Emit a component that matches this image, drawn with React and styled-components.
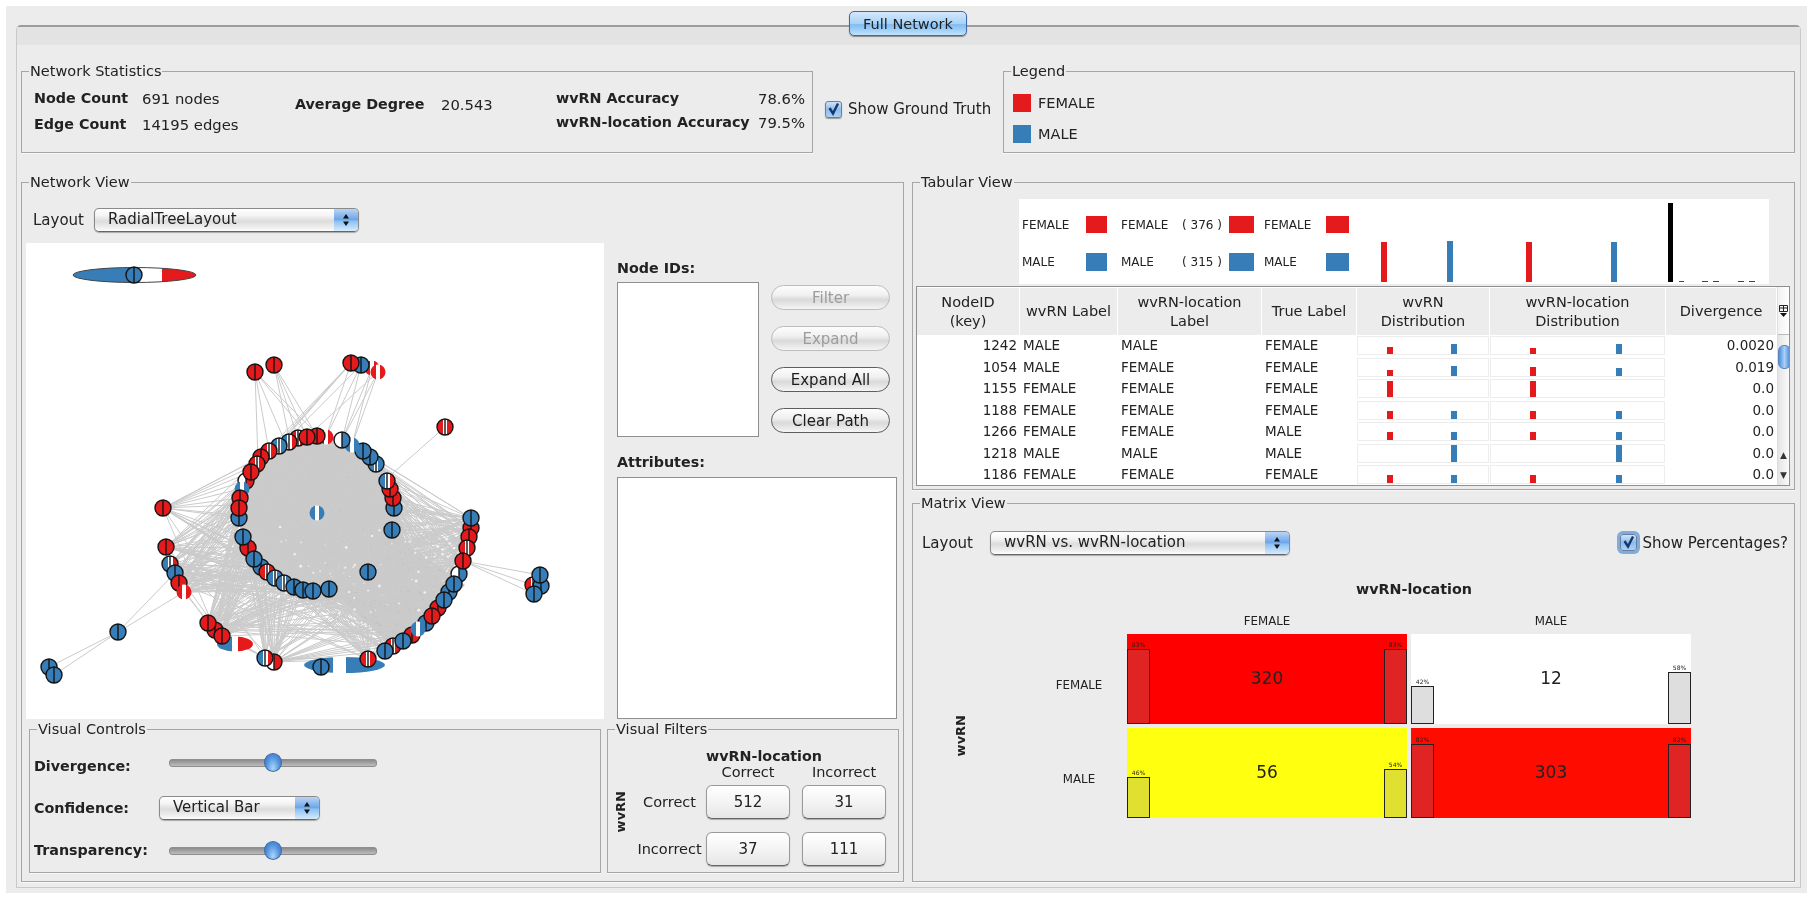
import React from "react";
import styled, { createGlobalStyle } from "styled-components";

const RED = "#e41a1c";
const BLUE = "#377eb8";

const GlobalStyle = createGlobalStyle`
  html, body {
    margin: 0;
    padding: 0;
    background: #ffffff;
    font-family: "DejaVu Sans", "Liberation Sans", sans-serif;
    font-size: 15px;
    color: #222;
  }
`;

const Window = styled.div`
  position: relative;
  margin: 6px 0 0 6px;
  width: 1801px;
  height: 887px;
  background: #ececec;
  padding: 19px 0 0 10px;
  box-sizing: border-box;
  filter: blur(0.5px);
`;

const TabButton = styled.div`
  position: absolute;
  top: 5px;
  left: 843px;
  width: 118px;
  height: 25px;
  box-sizing: border-box;
  border: 1px solid #3f68a8;
  border-radius: 5px;
  background: linear-gradient(#d4e8fb, #a9d2f7 50%, #7fbcf2 55%, #c0e2fc);
  display: flex;
  align-items: center;
  justify-content: center;
  font-size: 14.5px;
  box-shadow: 0 1px 1px #888;
`;

const TabPane = styled.div`
  width: 1785px;
  height: 863px;
  box-sizing: border-box;
  border: 1px solid #c9c9c9;
  border-top: 2px solid #9c9c9c;
  border-radius: 5px 5px 0 0;
`;

const TabBand = styled.div`
  height: 18px;
  background: #e3e3e3;
`;

const Content = styled.div`
  padding: 18px 0 0 4px;
  width: 1774px;
`;

const TopRow = styled.div`
  display: flex;
  height: 90px;
  margin-bottom: 21px;
`;

const MainRow = styled.div`
  display: flex;
  gap: 8px;
`;

const Group = styled.fieldset`
  margin: 0 0 0 ${(p) => (p.$push ? "auto" : "0")};
  padding: 0;
  min-width: 0;
  box-sizing: border-box;
  width: ${(p) => p.$w}px;
  height: ${(p) => p.$h}px;
  border: 1px solid #a6a6a6;
  flex: none;
  box-shadow: 0 1px 0 #f8f8f8;
`;

const GroupTitle = styled.legend`
  margin-left: 7px;
  padding: 0 1px;
  font-size: 14.5px;
  line-height: 16px;
  color: #222;
`;

const Stats = styled.div`
  display: flex;
  padding: 0 0 0 12px;
`;

const StatCol = styled.div`
  width: ${(p) => p.$w}px;
  flex: none;
  display: flex;
  flex-direction: column;
  justify-content: center;
  gap: ${(p) => p.$gap}px;
  height: 46px;
  margin-top: ${(p) => p.$top || 0}px;
`;

const StatRow = styled.div`
  display: flex;
  justify-content: ${(p) => (p.$spread ? "space-between" : "flex-start")};
  line-height: 17px;
  white-space: nowrap;
`;

const StatName = styled.span`
  font-weight: bold;
  font-size: 14.3px;
  width: ${(p) => p.$w}px;
  flex: none;
`;

const StatValue = styled.span`
  font-size: 14.8px;
`;

const CheckLabel = styled.div`
  display: flex;
  align-items: center;
  gap: 6px;
  font-size: 15px;
  white-space: nowrap;
  margin: ${(p) => p.$margin};
`;

const CheckBox = styled.span`
  width: 17px;
  height: 17px;
  box-sizing: border-box;
  border: 1px solid #6a7f9c;
  border-radius: 3px;
  background: linear-gradient(#cfe3f8, #8dbdee 50%, #a9d1f6);
  display: flex;
  align-items: center;
  justify-content: center;
  box-shadow: ${(p) => (p.$focus ? "0 0 0 3px #7dadde" : "0 1px 1px #999")};
`;

const LegendList = styled.div`
  display: flex;
  flex-direction: column;
  gap: 13px;
  padding: 15px 0 0 9px;
`;

const LegendRow = styled.div`
  display: flex;
  align-items: center;
  gap: 7px;
  font-size: 14.5px;
`;

const Swatch = styled.span`
  display: block;
  width: ${(p) => p.$w}px;
  height: ${(p) => p.$h}px;
  background: ${(p) => p.$color};
`;

const Toolbar = styled.div`
  display: flex;
  align-items: center;
  padding: ${(p) => p.$pad};
  gap: ${(p) => p.$gap}px;
  font-size: 15px;
`;

const SelectBox = styled.div`
  width: ${(p) => p.$w}px;
  height: 24px;
  box-sizing: border-box;
  flex: none;
  display: flex;
  border: 1px solid #8a8a8a;
  border-bottom-color: #666;
  border-radius: 5px;
  overflow: hidden;
  background: linear-gradient(#ffffff, #f4f4f4 30%, #dcdcdc 55%, #f3f3f3 90%, #fff);
  box-shadow: 0 1px 1px #aaa;
  font-size: 15px;
  margin-left: ${(p) => p.$shift || 0}px;
`;

const SelectText = styled.span`
  flex: 1;
  padding-left: 13px;
  line-height: 21px;
  white-space: nowrap;
`;

const SelectArrow = styled.span`
  width: 24px;
  flex: none;
  background: linear-gradient(#b9d5f5, #6ea6e8 48%, #8cc0f4 55%, #d6ecfd);
  display: flex;
  align-items: center;
  justify-content: center;
`;

const NetworkBody = styled.div`
  display: flex;
  padding: 11px 0 0 4px;
  gap: 13px;
`;

const Canvas = styled.svg`
  display: block;
  width: 578px;
  height: 476px;
  background: #fff;
  flex: none;
`;

const SidePanel = styled.div`
  width: 280px;
  flex: none;
  padding-top: 17px;
`;

const BoldLabel = styled.div`
  font-weight: bold;
  font-size: 14.3px;
  line-height: 17px;
  margin-bottom: ${(p) => p.$mb || 0}px;
`;

const NodeRow = styled.div`
  display: flex;
  gap: 12px;
  margin: 5px 0 17px;
`;

const ListBox = styled.div`
  width: ${(p) => p.$w}px;
  height: ${(p) => p.$h}px;
  box-sizing: border-box;
  background: #fff;
  border: 1px solid #8f8f8f;
  flex: none;
`;

const PillStack = styled.div`
  display: flex;
  flex-direction: column;
  gap: 16px;
  padding-top: 3px;
`;

const Pill = styled.div`
  width: 119px;
  height: 25px;
  box-sizing: border-box;
  border-radius: 13px;
  border: 1px solid ${(p) => (p.$off ? "#bcbcbc" : "#5e5e5e")};
  background: linear-gradient(#fdfdfd, #f0f0f0 40%, #d9d9d9 60%, #f5f5f5);
  color: ${(p) => (p.$off ? "#9c9c9c" : "#1c1c1c")};
  display: flex;
  align-items: center;
  justify-content: center;
  font-size: 15px;
`;

const BottomRow = styled.div`
  display: flex;
  gap: 6px;
  padding: 2px 0 0 7px;
`;

const ControlGrid = styled.div`
  display: grid;
  grid-template-columns: 129px 206px;
  grid-template-rows: 42px 42px 42px;
  padding: 8px 0 0 4px;
  align-items: center;
`;

const Slider = styled.div`
  position: relative;
  width: 206px;
  height: 6px;
  border-radius: 3px;
  border: 1px solid #8e8e8e;
  box-sizing: content-box;
  background: linear-gradient(#8c8c8c, #bdbdbd);
  margin: ${(p) => p.$top}px 0 0 6px;
`;

const SliderThumb = styled.span`
  position: absolute;
  left: 94px;
  top: -7px;
  width: 18px;
  height: 19px;
  border-radius: 50%;
  border: 1px solid #44699e;
  box-sizing: border-box;
  background: radial-gradient(ellipse at 50% 85%, #a8d8fb, #4f8fdc 60%, #3b77c8);
`;

const FilterGrid = styled.div`
  display: grid;
  grid-template-columns: 20px 73px 96px 84px;
  grid-template-rows: 19px 13px 47px 47px;
  padding: 9px 0 0 5px;
  font-size: 14.5px;
  align-items: center;
`;

const FilterTitle = styled.div`
  grid-column: 3 / span 2;
  font-weight: bold;
  font-size: 14.3px;
  white-space: nowrap;
`;

const FilterHead = styled.div`
  text-align: center;
  width: 84px;
  grid-column: ${(p) => p.$col};
`;

const RotatedBold = styled.div`
  writing-mode: vertical-rl;
  transform: rotate(180deg);
  font-weight: bold;
  font-size: 13px;
  text-align: center;
`;

const FilterSide = styled(RotatedBold)`
  grid-column: 1;
  grid-row: 3 / span 2;
  margin-top: 0;
  margin-bottom: 26px;
`;

const FilterRowName = styled.div`
  text-align: center;
  white-space: nowrap;
`;

const CountButton = styled.div`
  width: 84px;
  height: 34px;
  box-sizing: border-box;
  border: 1px solid #9a9a9a;
  border-bottom-color: #666;
  border-radius: 6px;
  background: linear-gradient(#ffffff, #f4f4f4 50%, #e6e6e6);
  display: flex;
  align-items: center;
  justify-content: center;
  font-size: 15px;
  box-shadow: 0 1px 1px #aaa;
`;

const RightCol = styled.div`
  display: flex;
  flex-direction: column;
  gap: 5px;
  width: 883px;
`;

const Summary = styled.div`
  display: flex;
  height: 85px;
  width: 853px;
  margin: 9px 0 2px 3px;
  background: #fff;
`;

const SummaryCorner = styled.div`
  width: 103px;
  flex: none;
  background: #ececec;
`;

const SummaryKey = styled.div`
  display: grid;
  grid-template-columns: 64px 21px 14px 61px 47px 25px 10px 62px 23px;
  grid-template-rows: 39px 36px;
  padding: 6px 0 0 3px;
  font-size: 12px;
  align-items: center;
  flex: none;
  width: 330px;
  box-sizing: border-box;
`;

const KeyText = styled.span`
  white-space: nowrap;
  font-size: 12px;
`;

const Ticks = styled.div`
  position: relative;
  flex: 1;
`;

const Tick = styled.span`
  position: absolute;
  bottom: 2px;
  left: ${(p) => p.$x}px;
  width: ${(p) => p.$w}px;
  height: ${(p) => p.$h}px;
  background: ${(p) => p.$color};
`;

const TableWrap = styled.div`
  margin: 0 0 0 3px;
  width: 874px;
  height: 200px;
  box-sizing: border-box;
  border: 1px solid #8f8f8f;
  display: flex;
  background: #fff;
  overflow: hidden;
`;

const TableMain = styled.div`
  width: 860px;
  flex: none;
`;

const ColGrid = styled.div`
  display: grid;
  grid-template-columns: 103px 98px 144px 95px 133px 176px 111px;
`;

const HeadRow = styled(ColGrid)`
  height: 47px;
  margin-top: 1px;
`;

const HeadCell = styled.div`
  background: #ececec;
  border-right: 1px solid #fff;
  display: flex;
  align-items: center;
  justify-content: center;
  text-align: center;
  font-size: 14.5px;
  line-height: 19px;
  white-space: pre-line;
`;

const DataRow = styled(ColGrid)`
  height: 21.5px;
  font-size: 13.5px;
  line-height: 21px;
`;

const IdCell = styled.div`
  text-align: right;
  padding-right: 3px;
`;

const TextCell = styled.div`
  padding-left: 3px;
`;

const NumCell = styled.div`
  text-align: right;
  padding-right: 3px;
`;

const DistCell = styled.div`
  height: 19px;
  box-sizing: border-box;
  margin: 1px 1px 0 0;
  border: 1px solid #ededed;
  display: grid;
  grid-template-columns: ${(p) => p.$cols};
  align-items: end;
  justify-items: start;
  padding-left: ${(p) => p.$pad}px;
`;

const DistBar = styled.span`
  display: block;
  width: 6px;
  background: ${(p) => p.$color};
  height: ${(p) => p.$h}px;
`;

const Scroller = styled.div`
  flex: 1;
  background: linear-gradient(90deg, #e4e4e4, #fafafa);
  position: relative;
  border-left: 1px solid #ddd;
`;

const ScrollCorner = styled.div`
  height: 48px;
  box-sizing: border-box;
  border-bottom: 1px solid #bbb;
  background: linear-gradient(90deg, #f2f2f2, #ffffff);
  display: flex;
  align-items: center;
  justify-content: center;
`;

const ScrollThumb = styled.div`
  position: absolute;
  top: 58px;
  left: 0;
  width: 13px;
  height: 24px;
  border-radius: 6px;
  background: linear-gradient(90deg, #4f8ddc, #a9d0f8 50%, #4c86d6);
  border: 1px solid #5a84bd;
  box-sizing: border-box;
`;

const ScrollArrow = styled.div`
  position: absolute;
  left: 0;
  right: 0;
  height: 20px;
  top: ${(p) => p.$top}px;
  display: flex;
  align-items: center;
  justify-content: center;
`;

const MatrixBar = styled.div`
  display: flex;
  justify-content: space-between;
  padding: 11px 6px 0 9px;
  height: 41px;
  align-items: center;
  box-sizing: content-box;
`;

const MatrixLeft = styled.div`
  display: flex;
  align-items: center;
  gap: 17px;
  font-size: 15px;
`;

const MatrixHeading = styled.div`
  font-weight: bold;
  font-size: 14.3px;
  text-align: center;
  margin: 18px 0 0 0;
  padding-left: 121px;
  height: 17px;
  line-height: 17px;
`;

const MatrixGrid = styled.div`
  display: grid;
  grid-template-columns: 78px 96px 284px 284px;
  grid-template-rows: 26px 94px 90px;
  margin: 10px 0 0 40px;
  align-items: center;
  font-size: 11.8px;
`;

const MatrixSide = styled(RotatedBold)`
  grid-column: 1;
  grid-row: 2 / span 2;
  margin-top: 20px;
`;

const ColName = styled.div`
  text-align: center;
  width: 280px;
  grid-column: ${(p) => p.$col};
`;

const RowName = styled.div`
  text-align: center;
  grid-column: 2;
  align-self: start;
  line-height: 90px;
  margin-top: 6px;
`;

const MatrixCell = styled.div`
  height: 90px;
  width: 280px;
  background: ${(p) => p.$bg};
  display: flex;
  justify-content: space-between;
  align-self: start;
  font-size: 17px;
`;

const CellCount = styled.span`
  flex: 1;
  align-self: center;
  text-align: center;
  padding-bottom: 2px;
`;

const RatioCol = styled.div`
  width: 23px;
  height: 90px;
  display: flex;
  flex-direction: column;
  justify-content: flex-end;
  align-items: center;
`;

const RatioText = styled.span`
  font-size: 6px;
  line-height: 8px;
`;

const RatioBar = styled.div`
  width: 23px;
  box-sizing: border-box;
  border: 1.5px solid #222;
  background: ${(p) => p.$fill};
`;

const TinyArrows = ({ color = "#111" }) => (
  <svg width="8" height="14" viewBox="0 0 8 14">
    <path d="M4 1 L7 5.5 L1 5.5 Z M4 13 L7 8.5 L1 8.5 Z" fill={color} />
  </svg>
);

const Tickmark = () => (
  <svg width="13" height="13" viewBox="0 0 13 13">
    <path d="M2.5 5 L6 10.5 L11 0.5" fill="none" stroke="#17386b" strokeWidth="2.4" />
  </svg>
);

const Select = ({ w, shift, children }) => (
  <SelectBox $w={w} $shift={shift}>
    <SelectText>{children}</SelectText>
    <SelectArrow>
      <TinyArrows />
    </SelectArrow>
  </SelectBox>
);

// simple seeded random so the edges stay the same on each render
const makeRandom = (seed) => () => {
  seed = (seed * 16807) % 2147483647;
  return (seed - 1) / 2147483646;
};

const inner = [
  [394, 508, "b"], [393, 498, "r"], [390, 489, "r"], [387, 481, "brw"], [376, 464, "bw"], [370, 457, "b"],
  [363, 451, "b"], [352, 445, "bw", 1], [342, 440, "wb"], [326, 437, "rw", 1], [317, 436, "r"], [298, 438, "rw"],
  [307, 437, "r"], [289, 442, "bwr"], [279, 446, "bw"], [269, 451, "rw"], [261, 457, "r"], [257, 464, "rw"],
  [246, 481, "wr"], [251, 472, "r"], [242, 489, "bw", 1], [239, 518, "b"], [240, 498, "r"], [239, 508, "r"],
  [392, 530, "b"], [248, 548, "r"], [243, 537, "b"], [261, 567, "b"], [254, 559, "b"], [267, 572, "rw"],
  [275, 578, "bw"], [284, 583, "bw"], [294, 587, "b"], [303, 590, "b"], [313, 591, "b"], [329, 589, "b"],
  [368, 572, "b"],
];

const lower = [
  [471, 528, "r"], [471, 518, "b"], [469, 537, "r"], [467, 548, "rw"], [459, 574, "wb"], [463, 561, "r"],
  [449, 592, "b"], [454, 584, "b"], [438, 608, "r"], [444, 600, "b"], [426, 623, "b"], [432, 616, "r"],
  [412, 635, "r"], [418, 629, "bw", 1], [393, 646, "rw"], [403, 641, "b"], [385, 651, "b"], [368, 659, "rw"],
  [274, 662, "wr"], [265, 658, "bwr"], [215, 630, "r"], [208, 623, "r"], [222, 636, "r"],
];

const leftSide = [
  [163, 508, "r"], [166, 547, "r"], [170, 564, "bwr"], [175, 573, "b"], [179, 583, "r"], [184, 592, "rw", 1],
];

const outliers = [
  [255, 372, "r"], [274, 365, "r"], [372, 368, "rw", 1], [378, 372, "rw", 1], [361, 365, "b"], [351, 363, "r"],
  [445, 427, "rw"], [118, 632, "b"], [49, 667, "b"], [54, 675, "b"], [321, 667, "b"], [533, 585, "rw"],
  [541, 586, "b"], [540, 575, "b"], [534, 594, "b"], [317, 513, "bw", 1],
];

const buildEdges = () => {
  const rand = makeRandom(4711);
  let d = "";
  const link = (a, b) => {
    d += `M${a[0]} ${a[1]}L${b[0]} ${b[1]}`;
  };
  const mesh = (from, to, chance) => {
    from.forEach((a) => to.forEach((b) => {
      if (a !== b && rand() < chance) link(a, b);
    }));
  };
  mesh(inner, inner, 0.5);
  mesh(inner, lower, 0.5);
  mesh(lower, lower, 0.22);
  mesh(leftSide, inner, 0.5);
  mesh(leftSide, lower, 0.22);
  const tops = [
    [[255, 372], [[285, 442], [310, 437], [320, 437], [269, 451], [258, 460]]],
    [[274, 365], [[298, 438], [317, 436], [307, 437], [290, 442]]],
    [[351, 363], [[326, 437], [251, 472], [246, 481], [240, 490], [261, 457]]],
    [[361, 365], [[342, 440], [326, 437], [246, 481]]],
    [[372, 368], [[342, 440], [352, 445]]],
    [[378, 372], [[342, 440], [352, 445], [240, 498]]],
    [[445, 427], [[385, 480]]],
    [[118, 632], [[175, 573], [184, 592], [49, 667], [54, 675]]],
    [[463, 561], [[540, 575], [533, 585], [534, 594]]],
  ];
  tops.forEach(([a, list]) => list.forEach((b) => link(a, b)));
  return d;
};

const edgePath = buildEdges();

const specks = (() => {
  const rand = makeRandom(99);
  return Array.from({ length: 70 }, () => [280 + rand() * 170, 525 + rand() * 90, 0.5 + rand()]);
})();

const stripes = {
  rw: [RED, 0.36, "#fff", 0.64, RED],
  bw: [BLUE, 0.36, "#fff", 0.64, BLUE],
  wb: ["#fff", 0.5, BLUE, 0.5, BLUE],
  wr: ["#fff", 0.5, RED, 0.5, RED],
  brw: [BLUE, 0.4, "#fff", 0.7, RED],
  bwr: [BLUE, 0.4, "#fff", 0.7, RED],
};

const Gradients = () => (
  <defs>
    {Object.entries(stripes).map(([id, [a, p, b, q, c]]) => (
      <linearGradient key={id} id={id}>
        <stop offset={p} stopColor={a} />
        <stop offset={p} stopColor={b} />
        <stop offset={q} stopColor={b} />
        <stop offset={q} stopColor={c} />
      </linearGradient>
    ))}
    <linearGradient id="topBlob">
      <stop offset="0.49" stopColor={BLUE} />
      <stop offset="0.49" stopColor="#fff" />
      <stop offset="0.72" stopColor="#fff" />
      <stop offset="0.72" stopColor={RED} />
    </linearGradient>
    <linearGradient id="midBlob">
      <stop offset="0.42" stopColor={BLUE} />
      <stop offset="0.42" stopColor="#fff" />
      <stop offset="0.58" stopColor="#fff" />
      <stop offset="0.58" stopColor={RED} />
    </linearGradient>
    <linearGradient id="lowBlob">
      <stop offset="0.36" stopColor={BLUE} />
      <stop offset="0.36" stopColor="#fff" />
      <stop offset="0.52" stopColor="#fff" />
      <stop offset="0.52" stopColor={BLUE} />
    </linearGradient>
  </defs>
);

const GraphNode = ({ x, y, kind, faded }) => {
  const fill = kind === "r" ? RED : kind === "b" ? BLUE : `url(#${kind})`;
  if (faded) {
    return <circle cx={x} cy={y} r="7.5" fill={fill} />;
  }
  return (
    <g>
      <circle cx={x} cy={y} r="8" fill={fill} stroke="#151515" strokeWidth="1.4" />
      <line x1={x} y1={y - 8} x2={x} y2={y + 8} stroke="#151515" strokeWidth="1.4" />
    </g>
  );
};

const Graph = () => (
  <Canvas viewBox="26 243 578 476">
    <Gradients />
    <path
      d="M238 505 C240 460 280 436 317 436 C360 436 394 465 396 505 L402 540 L465 585 L430 622 L385 640 L345 602 L290 592 L250 552 Z"
      fill="#c1c1c1"
    />
    <path d={edgePath} stroke="#cbcbcb" strokeWidth="1" fill="none" />
    {specks.map(([x, y, r], i) => (
      <circle key={i} cx={x} cy={y} r={r} fill="#efefef" />
    ))}
    <ellipse cx="134.5" cy="275" rx="61.5" ry="7.5" fill="url(#topBlob)" stroke="#444" strokeWidth="1" />
    <ellipse cx="344.5" cy="665" rx="40.5" ry="8" fill="url(#lowBlob)" />
    <ellipse cx="235" cy="644" rx="18" ry="7.5" fill="url(#midBlob)" />
    {[...inner, ...lower, ...leftSide, ...outliers].map(([x, y, kind, faded]) => (
      <GraphNode key={`${x}-${y}`} x={x} y={y} kind={kind} faded={faded} />
    ))}
    <GraphNode x={134} y={275} kind="b" />
  </Canvas>
);

const tableRows = [
  [1242, "MALE", "MALE", "FEMALE", [7, 10], [6, 10], "0.0020"],
  [1054, "MALE", "FEMALE", "FEMALE", [6, 10], [9, 8], "0.019"],
  [1155, "FEMALE", "FEMALE", "FEMALE", [16, 0], [16, 0], "0.0"],
  [1188, "FEMALE", "FEMALE", "FEMALE", [8, 8], [8, 8], "0.0"],
  [1266, "FEMALE", "FEMALE", "MALE", [8, 8], [8, 8], "0.0"],
  [1218, "MALE", "MALE", "MALE", [0, 17], [0, 17], "0.0"],
  [1186, "FEMALE", "FEMALE", "FEMALE", [8, 8], [8, 8], "0.0"],
];

const tableHeads = [
  "NodeID\n(key)",
  "wvRN Label",
  "wvRN-location\nLabel",
  "True Label",
  "wvRN\nDistribution",
  "wvRN-location\nDistribution",
  "Divergence",
];

const ticks = [
  [32, 6, 40, RED],
  [98, 6, 41, BLUE],
  [177, 6, 40, RED],
  [262, 6, 40, BLUE],
  [319, 5, 79, "#000"],
  [330, 5, 1, "#444"],
  [353, 6, 1, "#444"],
  [364, 6, 1, "#444"],
  [389, 6, 1, "#444"],
  [400, 6, 1, "#444"],
];

const Ratio = ({ pct, fill }) => (
  <RatioCol>
    <RatioText>{pct}%</RatioText>
    <RatioBar $fill={fill} style={{ height: Math.round(pct * 0.9) }} />
  </RatioCol>
);

const matrixCells = [
  { row: "FEMALE", bg: "#ff0000", fill: "#e02424", count: 320, left: 83, right: 83 },
  { bg: "#ffffff", fill: "#dedede", count: 12, left: 42, right: 58 },
  { row: "MALE", bg: "#ffff10", fill: "#e0e030", count: 56, left: 46, right: 54 },
  { bg: "#ff0c00", fill: "#e02424", count: 303, left: 82, right: 82 },
];

export default function App() {
  return (
    <>
      <GlobalStyle />
      <Window>
        <TabButton>Full Network</TabButton>
        <TabPane>
          <TabBand />
          <Content>
            <TopRow>
              <Group $w={792} $h={90}>
                <GroupTitle>Network Statistics</GroupTitle>
                <Stats>
                  <StatCol $w={261} $gap={9} $top={9}>
                    <StatRow>
                      <StatName $w={108}>Node Count</StatName>
                      <StatValue>691 nodes</StatValue>
                    </StatRow>
                    <StatRow>
                      <StatName $w={108}>Edge Count</StatName>
                      <StatValue>14195 edges</StatValue>
                    </StatRow>
                  </StatCol>
                  <StatCol $w={261} $gap={0} $top={2}>
                    <StatRow>
                      <StatName $w={146}>Average Degree</StatName>
                      <StatValue>20.543</StatValue>
                    </StatRow>
                  </StatCol>
                  <StatCol $w={249} $gap={7} $top={8}>
                    <StatRow $spread>
                      <StatName>wvRN Accuracy</StatName>
                      <StatValue>78.6%</StatValue>
                    </StatRow>
                    <StatRow $spread>
                      <StatName>wvRN-location Accuracy</StatName>
                      <StatValue>79.5%</StatValue>
                    </StatRow>
                  </StatCol>
                </Stats>
              </Group>
              <CheckLabel $margin="2px 0 0 12px">
                <CheckBox>
                  <Tickmark />
                </CheckBox>
                Show Ground Truth
              </CheckLabel>
              <Group $w={792} $h={90} $push>
                <GroupTitle>Legend</GroupTitle>
                <LegendList>
                  <LegendRow>
                    <Swatch $w={18} $h={18} $color={RED} />
                    FEMALE
                  </LegendRow>
                  <LegendRow>
                    <Swatch $w={18} $h={18} $color={BLUE} />
                    MALE
                  </LegendRow>
                </LegendList>
              </Group>
            </TopRow>
            <MainRow>
              <Group $w={883} $h={708}>
                <GroupTitle>Network View</GroupTitle>
                <Toolbar $pad="18px 0 0 11px" $gap={10}>
                  Layout
                  <Select w={265}>RadialTreeLayout</Select>
                </Toolbar>
                <NetworkBody>
                  <Graph />
                  <SidePanel>
                    <BoldLabel>Node IDs:</BoldLabel>
                    <NodeRow>
                      <ListBox $w={142} $h={155} />
                      <PillStack>
                        <Pill $off>Filter</Pill>
                        <Pill $off>Expand</Pill>
                        <Pill>Expand All</Pill>
                        <Pill>Clear Path</Pill>
                      </PillStack>
                    </NodeRow>
                    <BoldLabel $mb={6}>Attributes:</BoldLabel>
                    <ListBox $w={280} $h={242} />
                  </SidePanel>
                </NetworkBody>
                <BottomRow>
                  <Group $w={572} $h={152}>
                    <GroupTitle>Visual Controls</GroupTitle>
                    <ControlGrid>
                      <BoldLabel>Divergence:</BoldLabel>
                      <Slider $top={-6}>
                        <SliderThumb />
                      </Slider>
                      <BoldLabel>Confidence:</BoldLabel>
                      <Select w={161} shift={-4}>Vertical Bar</Select>
                      <BoldLabel>Transparency:</BoldLabel>
                      <Slider $top={2}>
                        <SliderThumb />
                      </Slider>
                    </ControlGrid>
                  </Group>
                  <Group $w={292} $h={152}>
                    <GroupTitle>Visual Filters</GroupTitle>
                    <FilterGrid>
                      <span />
                      <span />
                      <FilterTitle>wvRN-location</FilterTitle>
                      <FilterHead $col={3}>Correct</FilterHead>
                      <FilterHead $col={4}>Incorrect</FilterHead>
                      <FilterSide>wvRN</FilterSide>
                      <FilterRowName>Correct</FilterRowName>
                      <CountButton>512</CountButton>
                      <CountButton>31</CountButton>
                      <FilterRowName>Incorrect</FilterRowName>
                      <CountButton>37</CountButton>
                      <CountButton>111</CountButton>
                    </FilterGrid>
                  </Group>
                </BottomRow>
              </Group>
              <RightCol>
                <Group $w={883} $h={316}>
                  <GroupTitle>Tabular View</GroupTitle>
                  <Summary>
                    <SummaryCorner />
                    <SummaryKey>
                      <KeyText>FEMALE</KeyText>
                      <Swatch $w={21} $h={17} $color={RED} />
                      <span />
                      <KeyText>FEMALE</KeyText>
                      <KeyText>( 376 )</KeyText>
                      <Swatch $w={25} $h={17} $color={RED} />
                      <span />
                      <KeyText>FEMALE</KeyText>
                      <Swatch $w={23} $h={17} $color={RED} />
                      <KeyText>MALE</KeyText>
                      <Swatch $w={21} $h={18} $color={BLUE} />
                      <span />
                      <KeyText>MALE</KeyText>
                      <KeyText>( 315 )</KeyText>
                      <Swatch $w={25} $h={18} $color={BLUE} />
                      <span />
                      <KeyText>MALE</KeyText>
                      <Swatch $w={23} $h={18} $color={BLUE} />
                    </SummaryKey>
                    <Ticks>
                      {ticks.map(([x, w, h, color]) => (
                        <Tick key={x} $x={x} $w={w} $h={h} $color={color} />
                      ))}
                    </Ticks>
                  </Summary>
                  <TableWrap>
                    <TableMain>
                      <HeadRow>
                        {tableHeads.map((head) => (
                          <HeadCell key={head}>{head}</HeadCell>
                        ))}
                      </HeadRow>
                      {tableRows.map(([id, a, b, c, distA, distB, div]) => (
                        <DataRow key={id}>
                          <IdCell>{id}</IdCell>
                          <TextCell>{a}</TextCell>
                          <TextCell>{b}</TextCell>
                          <TextCell>{c}</TextCell>
                          <DistCell $cols="64px 6px" $pad={29}>
                            <DistBar $color={RED} $h={distA[0]} />
                            <DistBar $color={BLUE} $h={distA[1]} />
                          </DistCell>
                          <DistCell $cols="86px 6px" $pad={39}>
                            <DistBar $color={RED} $h={distB[0]} />
                            <DistBar $color={BLUE} $h={distB[1]} />
                          </DistCell>
                          <NumCell>{div}</NumCell>
                        </DataRow>
                      ))}
                    </TableMain>
                    <Scroller>
                      <ScrollCorner>
                        <svg width="11" height="14" viewBox="0 0 11 14">
                          <path d="M1.5 1.5H9.5V7.5H1.5ZM1.5 4H9.5M5.5 1.5V7.5" fill="none" stroke="#222" strokeWidth="1" />
                          <path d="M2 9H9L5.5 13Z" fill="#111" />
                        </svg>
                      </ScrollCorner>
                      <ScrollThumb />
                      <ScrollArrow $top={158}>
                        <svg width="9" height="9" viewBox="0 0 8 8">
                          <path d="M4 1L7 7H1Z" fill="#333" />
                        </svg>
                      </ScrollArrow>
                      <ScrollArrow $top={178}>
                        <svg width="9" height="9" viewBox="0 0 8 8">
                          <path d="M4 7L7 1H1Z" fill="#333" />
                        </svg>
                      </ScrollArrow>
                    </Scroller>
                  </TableWrap>
                </Group>
                <Group $w={883} $h={387}>
                  <GroupTitle>Matrix View</GroupTitle>
                  <MatrixBar>
                    <MatrixLeft>
                      Layout
                      <Select w={300}>wvRN vs. wvRN-location</Select>
                    </MatrixLeft>
                    <CheckLabel $margin="0">
                      <CheckBox $focus>
                        <Tickmark />
                      </CheckBox>
                      Show Percentages?
                    </CheckLabel>
                  </MatrixBar>
                  <MatrixHeading>wvRN-location</MatrixHeading>
                  <MatrixGrid>
                    <span />
                    <span />
                    <ColName $col={3}>FEMALE</ColName>
                    <ColName $col={4}>MALE</ColName>
                    <MatrixSide>wvRN</MatrixSide>
                    {matrixCells.map((cell) => (
                      <React.Fragment key={cell.count}>
                        {cell.row && <RowName>{cell.row}</RowName>}
                        <MatrixCell $bg={cell.bg}>
                          <Ratio pct={cell.left} fill={cell.fill} />
                          <CellCount>{cell.count}</CellCount>
                          <Ratio pct={cell.right} fill={cell.fill} />
                        </MatrixCell>
                      </React.Fragment>
                    ))}
                  </MatrixGrid>
                </Group>
              </RightCol>
            </MainRow>
          </Content>
        </TabPane>
      </Window>
    </>
  );
}
